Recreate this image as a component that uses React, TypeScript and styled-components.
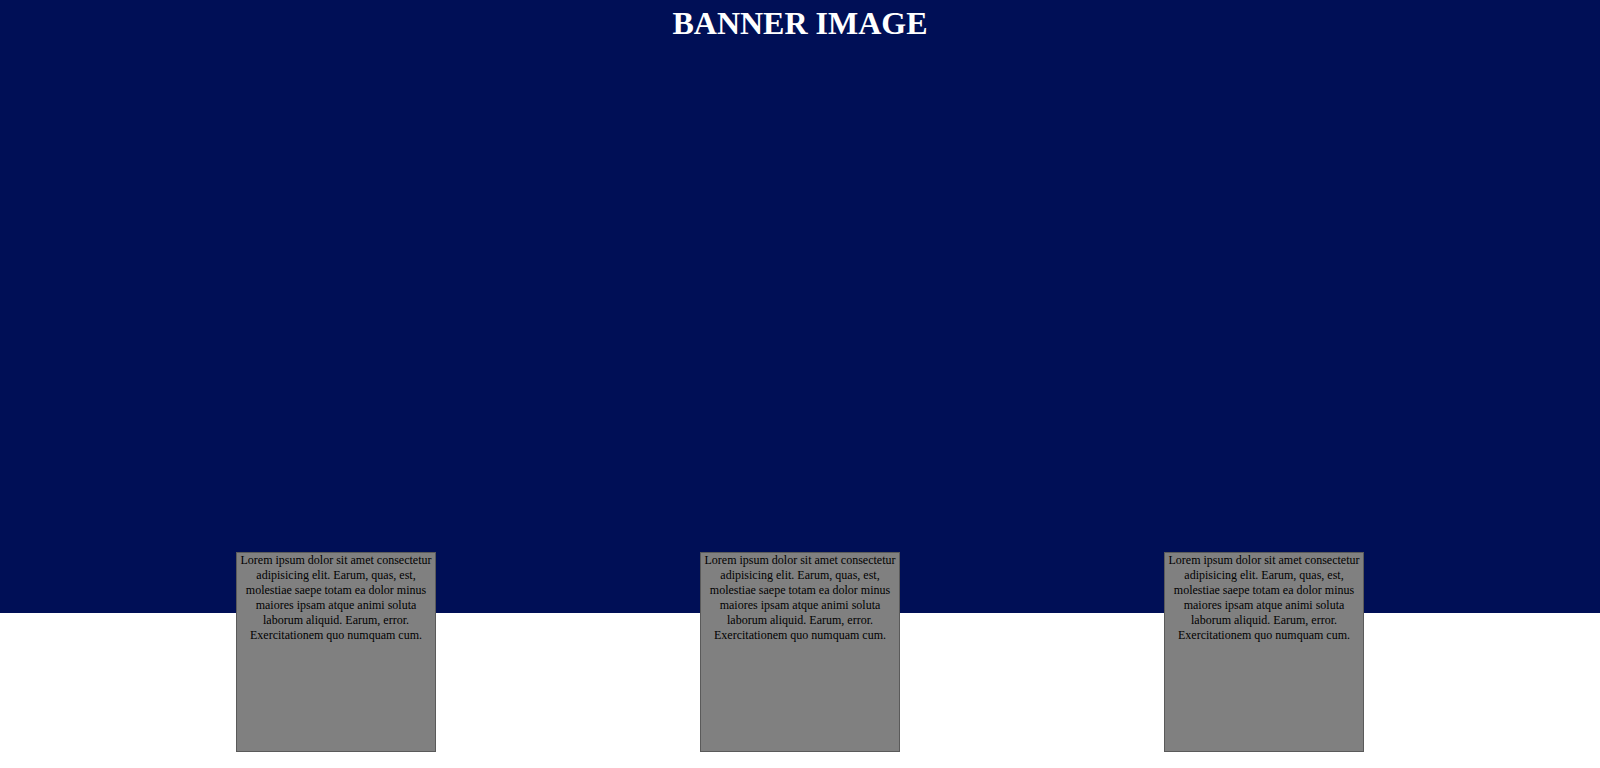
import React from "react";
import styled, { createGlobalStyle } from "styled-components";

const GlobalStyle = createGlobalStyle`
    html, body {
        margin: 0;
        padding: 0;
        background: #ffffff;
        font-family: "Liberation Serif", "Times New Roman", serif;
    }
`;

const Page = styled.div`
    display: flex;
    flex-direction: column;
    width: 1600px;
`;

const Banner = styled.header`
    height: 613px;
    background: #000f56;
    padding-top: 5px;
    box-sizing: border-box;
`;

const BannerTitle = styled.h1`
    margin: 0;
    text-align: center;
    color: #ffffff;
    font-size: 32px;
    font-weight: bold;
    line-height: normal;
`;

// Cards overlap the bottom of the banner, so the row is pulled up into it.
const CardRow = styled.section`
    display: flex;
    justify-content: center;
    gap: 264px;
    margin-top: -61px;
`;

const Card = styled.article`
    width: 200px;
    height: 200px;
    box-sizing: border-box;
    border: 1px solid #5a5a5a;
    background: #808080;
    color: #000000;
    font-size: 12px;
    line-height: normal;
    text-align: center;
`;

const cardText =
    "Lorem ipsum dolor sit amet consectetur adipisicing elit. Earum, quas, est, molestiae saepe totam ea dolor minus maiores ipsam atque animi soluta laborum aliquid. Earum, error. Exercitationem quo numquam cum.";

const cards = [1, 2, 3];

export default function App() {
    return (
        <Page>
            <GlobalStyle />
            <Banner>
                <BannerTitle>BANNER IMAGE</BannerTitle>
            </Banner>
            <CardRow>
                {cards.map((id) => (
                    <Card key={id}>{cardText}</Card>
                ))}
            </CardRow>
        </Page>
    );
}
